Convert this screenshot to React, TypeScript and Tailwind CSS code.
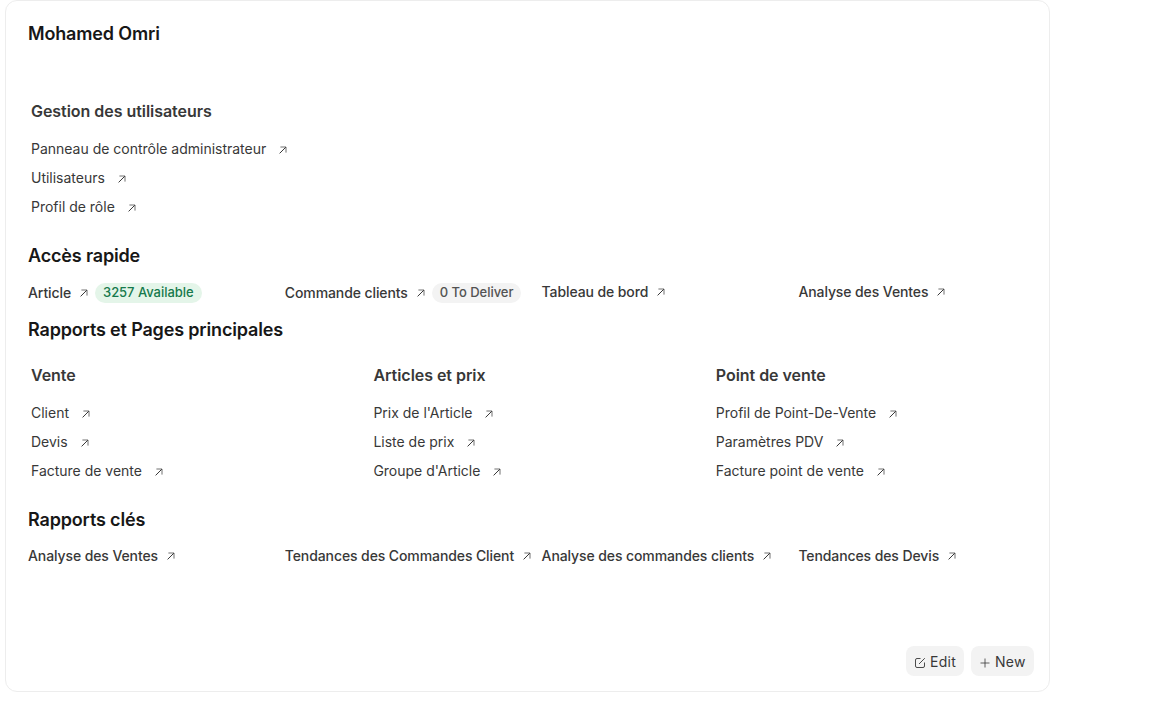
import React from "react";

function Arrow({ className = "" }: { className?: string }) {
  return (
    <svg className={`h-2 w-2 shrink-0 ${className}`} viewBox="0 0 8 8" fill="none" stroke="#383838">
      <path d="M0.6 7.4L6.8 1.2" strokeWidth="1" />
      <path d="M1.4 1H7V6.6" strokeWidth="0.9" strokeOpacity="0.8" />
    </svg>
  );
}

function Heading({ children, className = "" }: { children: React.ReactNode; className?: string }) {
  return (
    <h2 className={`flex h-6 items-center text-[18px] font-semibold tracking-[-0.16px] text-[#171717] ${className}`}>
      {children}
    </h2>
  );
}

function LinkCard({ title, links }: { title: string; links: string[] }) {
  return (
    <section className="w-[342.4px] shrink-0 pl-[3px]">
      <h3 className="flex h-6 items-center text-[16px] font-semibold tracking-[-0.04px] text-[#383838]">{title}</h3>
      <ul className="mt-[11px]">
        {links.map((link) => (
          <li key={link} className="flex h-[29px] items-center text-[14px] tracking-[-0.01px] text-[#383838]">
            <span>{link}</span>
            <Arrow className="ml-[13px] mt-[2px]" />
          </li>
        ))}
      </ul>
    </section>
  );
}

type Item = { label: string; badge?: string; tone?: string };

function Shortcuts({ items, className = "" }: { items: Item[]; className?: string }) {
  return (
    <div className={`flex h-5 ${className}`}>
      {items.map((item) => (
        <div
          key={item.label}
          className="flex w-[256.8px] shrink-0 items-center whitespace-nowrap text-[14px] font-medium tracking-[-0.1px] text-[#383838]"
        >
          <span className={item.badge ? "pb-px" : "pb-[4px]"}>{item.label}</span>
          <Arrow className={item.badge ? "ml-[9px]" : "mb-[2px] ml-[9px]"} />
          {item.badge && (
            <span className={`ml-[7px] flex h-5 items-center rounded-full px-2 text-[13px] tracking-[-0.03px] ${item.tone}`}>
              {item.badge}
            </span>
          )}
        </div>
      ))}
    </div>
  );
}

export default function App() {
  return (
    <main className="h-[708px] overflow-hidden bg-white pl-[5px] font-['Inter',sans-serif]">
      <div className="flex h-[692px] w-[1045px] flex-col rounded-xl border border-[#ededed] pl-[22px] pt-[20px]">
        <Heading>Mohamed Omri</Heading>
        <div className="mt-[54px]">
          <LinkCard
            title="Gestion des utilisateurs"
            links={["Panneau de contrôle administrateur", "Utilisateurs", "Profil de rôle"]}
          />
        </div>
        <Heading className="mt-[22px]">Accès rapide</Heading>
        <Shortcuts
          className="mt-[16px]"
          items={[
            { label: "Article", badge: "3257 Available", tone: "bg-[#e4f5e9] text-[#16794c]" },
            { label: "Commande clients", badge: "0 To Deliver", tone: "bg-[#f3f3f3] text-[#525252]" },
            { label: "Tableau de bord" },
            { label: "Analyse des Ventes" },
          ]}
        />
        <Heading className="mt-[14px]">Rapports et Pages principales</Heading>
        <div className="mt-[22px] flex">
          <LinkCard title="Vente" links={["Client", "Devis", "Facture de vente"]} />
          <LinkCard title="Articles et prix" links={["Prix de l'Article", "Liste de prix", "Groupe d'Article"]} />
          <LinkCard
            title="Point de vente"
            links={["Profil de Point-De-Vente", "Paramètres PDV", "Facture point de vente"]}
          />
        </div>
        <Heading className="mt-[22px]">Rapports clés</Heading>
        <Shortcuts
          className="mt-[16px]"
          items={[
            { label: "Analyse des Ventes" },
            { label: "Tendances des Commandes Client" },
            { label: "Analyse des commandes clients" },
            { label: "Tendances des Devis" },
          ]}
        />
        <div className="mb-[15px] mr-[15px] mt-auto flex justify-end gap-[7px] text-[14px] tracking-[0.02em] text-[#383838]">
          <button className="flex h-[30px] w-[58px] items-center rounded-lg bg-[#f3f3f3] pl-2">
            <svg className="mt-1 h-3 w-3" viewBox="0 0 12 12" fill="none" stroke="#383838" strokeWidth="0.9">
              <path d="M6.5 1.5H3A1.5 1.5 0 0 0 1.5 3V9A1.5 1.5 0 0 0 3 10.5H9A1.5 1.5 0 0 0 10.5 9V5.5M5 7L10.8 1.2" />
            </svg>
            <span className="ml-[4px] mt-px">Edit</span>
          </button>
          <button className="flex h-[30px] w-[63px] items-center rounded-lg bg-[#f3f3f3] pl-2">
            <svg className="mt-1 h-3 w-3" viewBox="0 0 12 12" fill="none" stroke="#383838" strokeWidth="0.8">
              <path d="M6 1.5V10.5M1.5 6H10.5" />
            </svg>
            <span className="ml-[4px] mt-px">New</span>
          </button>
        </div>
      </div>
    </main>
  );
}
